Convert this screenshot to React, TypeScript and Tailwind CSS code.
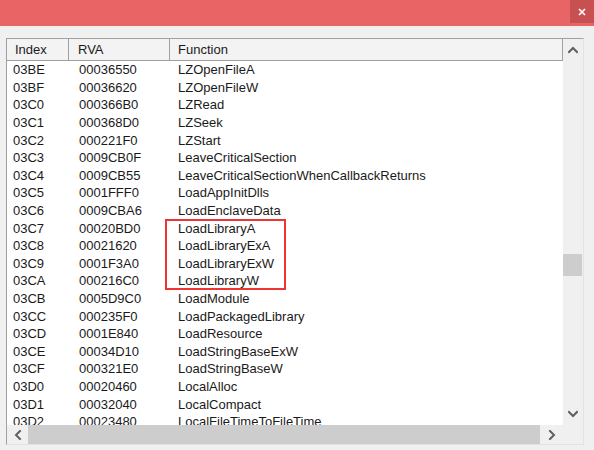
import React from "react";

const rows: [string, string, string][] = [
  ["03BE", "00036550", "LZOpenFileA"],
  ["03BF", "00036620", "LZOpenFileW"],
  ["03C0", "000366B0", "LZRead"],
  ["03C1", "000368D0", "LZSeek"],
  ["03C2", "000221F0", "LZStart"],
  ["03C3", "0009CB0F", "LeaveCriticalSection"],
  ["03C4", "0009CB55", "LeaveCriticalSectionWhenCallbackReturns"],
  ["03C5", "0001FFF0", "LoadAppInitDlls"],
  ["03C6", "0009CBA6", "LoadEnclaveData"],
  ["03C7", "00020BD0", "LoadLibraryA"],
  ["03C8", "00021620", "LoadLibraryExA"],
  ["03C9", "0001F3A0", "LoadLibraryExW"],
  ["03CA", "000216C0", "LoadLibraryW"],
  ["03CB", "0005D9C0", "LoadModule"],
  ["03CC", "000235F0", "LoadPackagedLibrary"],
  ["03CD", "0001E840", "LoadResource"],
  ["03CE", "00034D10", "LoadStringBaseExW"],
  ["03CF", "000321E0", "LoadStringBaseW"],
  ["03D0", "00020460", "LocalAlloc"],
  ["03D1", "00032040", "LocalCompact"],
  ["03D2", "00023480", "LocalFileTimeToFileTime"],
];

function Chevron({ dir }: { dir: "up" | "down" | "left" | "right" }) {
  const d =
    dir === "up"
      ? "M1 6 L5 2 L9 6"
      : dir === "down"
      ? "M1 2 L5 6 L9 2"
      : dir === "left"
      ? "M6 1 L2 5 L6 9"
      : "M2 1 L6 5 L2 9";
  const w = dir === "up" || dir === "down" ? 10 : 8;
  const h = dir === "up" || dir === "down" ? 8 : 10;
  return (
    <svg width={w} height={h} viewBox={`0 0 ${w} ${h}`}>
      <path d={d} fill="none" stroke="#606060" strokeWidth="2" strokeLinecap="square" />
    </svg>
  );
}

export default function App() {
  return (
    <div
      className="w-[594px] h-[450px] bg-[#f0f0f0] overflow-hidden flex flex-col"
      style={{ fontFamily: '"Liberation Sans", Arial, sans-serif' }}
    >
      <div className="h-[26px] bg-[#e86465] flex justify-end shrink-0">
        <div className="w-[24px] h-[23px] bg-[#c75051] flex items-center justify-center">
          <svg width="8" height="8" viewBox="0 0 8 8">
            <path d="M1 1 L7 7 M7 1 L1 7" stroke="#ffffff" strokeWidth="1.6" />
          </svg>
        </div>
      </div>
      <div className="pl-[6px] pt-[12px]">
        <div className="w-[578px] h-[407px] border border-t-[#a0a0a0] border-l-[#a0a0a0] border-r-[#e3e3e3] border-b-[#e3e3e3] bg-white flex flex-col">
          <div className="flex h-[386px]">
            <div className="w-[556px] flex flex-col">
              <div className="h-[22px] flex bg-[#f3f3f3] border-b border-[#a0a0a0] text-[13px] text-[#1a1a1a] shrink-0">
                <div className="w-[62px] border-r border-[#a0a0a0] pl-[8px] flex items-center">Index</div>
                <div className="w-[101px] border-r border-[#a0a0a0] pl-[9px] flex items-center">RVA</div>
                <div className="flex-1 border-r border-[#a0a0a0] pl-[8px] flex items-center">Function</div>
              </div>
              <div className="relative flex-1 overflow-hidden text-[13px] text-[#1a1a1a]">
                {rows.map(([i, r, f]) => (
                  <div key={i} className="flex h-[17.6px] items-center leading-none">
                    <div className="w-[62px] pl-[6px]">{i}</div>
                    <div className="w-[101px] pl-[10px]">{r}</div>
                    <div className="flex-1 pl-[8px] whitespace-nowrap">{f}</div>
                  </div>
                ))}
                <div className="absolute left-[158px] top-[158px] w-[121px] h-[71px] border-2 border-[#ee3535]" />
              </div>
            </div>
            <div className="w-[20px] bg-[#f0f0f0] flex flex-col items-center">
              <div className="h-[22px] flex items-center justify-center">
                <Chevron dir="up" />
              </div>
              <div className="h-[193px]" />
              <div className="w-[19px] h-[22px] bg-[#cdcdcd] self-start" />
              <div className="flex-1" />
              <div className="h-[22px] flex items-center justify-center">
                <Chevron dir="down" />
              </div>
            </div>
          </div>
          <div className="flex flex-1 bg-[#f0f0f0]">
            <div className="w-[556px] flex items-center">
              <div className="w-[21px] flex items-center justify-center">
                <Chevron dir="left" />
              </div>
              <div className="w-[512px] h-full bg-[#cdcdcd]" />
              <div className="flex-1 flex items-center justify-center">
                <Chevron dir="right" />
              </div>
            </div>
            <div className="w-[20px]" />
          </div>
        </div>
      </div>
    </div>
  );
}
